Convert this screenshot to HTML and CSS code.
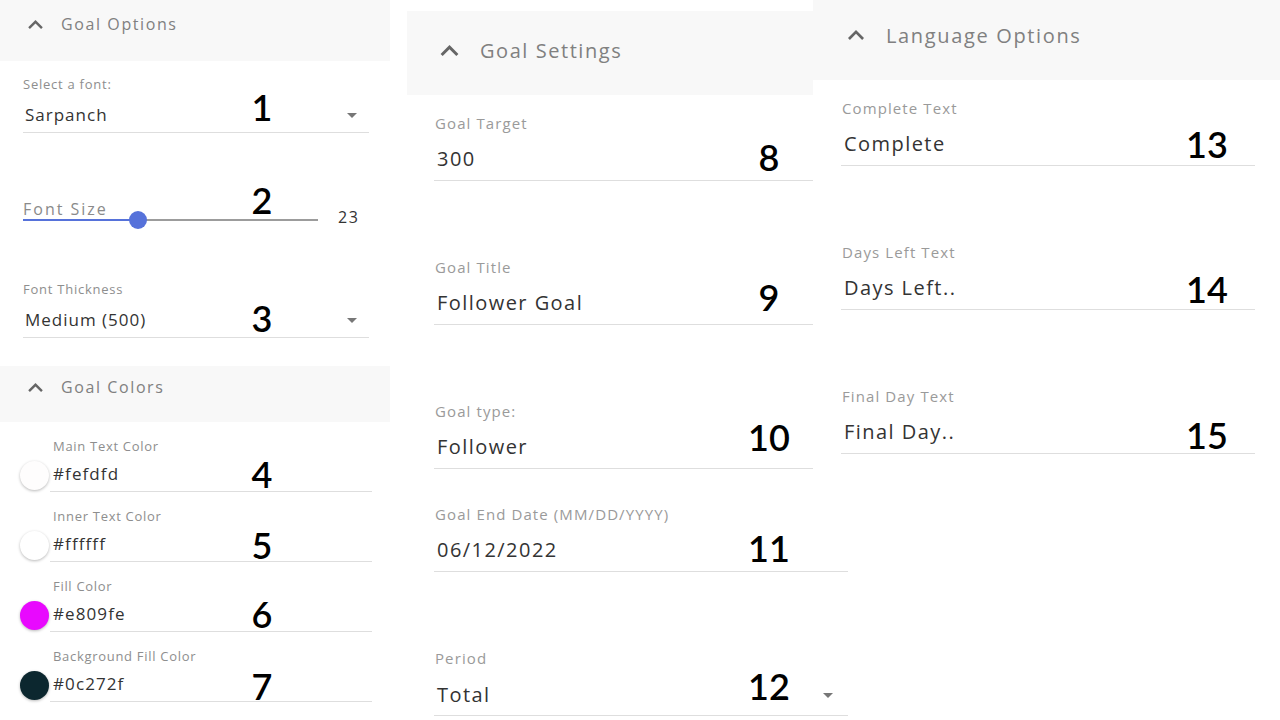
FILE: index.html
```html
<!DOCTYPE html>
<html lang="en">
<head>
<meta charset="utf-8">
<title>Goal widget settings</title>
<link rel="stylesheet" href="styles.css">
</head>
<body>
<div class="collage">

  <section class="col col-a">
    <div class="head head-a">
      <div class="head-line">
        <svg class="chev chev-a" viewBox="6 8 12 7.41"><path d="M7.41 15.41L12 10.83l4.59 4.58L18 14l-6-6-6 6z"/></svg>
        <span>Goal Options</span>
      </div>
    </div>

    <div class="field-a f-font">
      <div class="lab-a">Select a font:</div>
      <div class="val-a">
        <span>Sarpanch</span><span class="caret"></span>
        <span class="anno up8">1</span>
      </div>
    </div>

    <div class="slider">
      <div class="slider-main">
        <div class="slider-label">Font Size</div>
        <div class="track"><div class="track-on"></div><div class="thumb"></div></div>
        <span class="anno anno-slider">2</span>
      </div>
      <div class="slider-val">23</div>
    </div>

    <div class="field-a f-thick">
      <div class="lab-a">Font Thickness</div>
      <div class="val-a">
        <span>Medium (500)</span><span class="caret"></span>
        <span class="anno up2">3</span>
      </div>
    </div>

    <div class="head head-colors">
      <div class="head-line">
        <svg class="chev chev-a" viewBox="6 8 12 7.41"><path d="M7.41 15.41L12 10.83l4.59 4.58L18 14l-6-6-6 6z"/></svg>
        <span>Goal Colors</span>
      </div>
    </div>

    <div class="crow first">
      <span class="swatch sw-fefdfd"></span>
      <div class="cfield">
        <div class="lab-c">Main Text Color</div>
        <div class="val-c"><span>#fefdfd</span><span class="anno up3">4</span></div>
      </div>
    </div>
    <div class="crow">
      <span class="swatch sw-ffffff"></span>
      <div class="cfield">
        <div class="lab-c">Inner Text Color</div>
        <div class="val-c"><span>#ffffff</span><span class="anno up2">5</span></div>
      </div>
    </div>
    <div class="crow">
      <span class="swatch sw-e809fe"></span>
      <div class="cfield">
        <div class="lab-c">Fill Color</div>
        <div class="val-c"><span>#e809fe</span><span class="anno up3">6</span></div>
      </div>
    </div>
    <div class="crow">
      <span class="swatch sw-0c272f"></span>
      <div class="cfield">
        <div class="lab-c">Background Fill Color</div>
        <div class="val-c"><span>#0c272f</span><span class="anno up1">7</span></div>
      </div>
    </div>
  </section>

  <section class="col col-b">
    <div class="head head-b">
      <div class="head-line big">
        <svg class="chev chev-b" viewBox="6 8 12 7.41"><path d="M7.41 15.41L12 10.83l4.59 4.58L18 14l-6-6-6 6z"/></svg>
        <span>Goal Settings</span>
      </div>
    </div>

    <div class="field-b gap-first">
      <div class="lab-b">Goal Target</div>
      <div class="val-b"><span>300</span><span class="anno up2">8</span></div>
    </div>
    <div class="field-b gap-big">
      <div class="lab-b">Goal Title</div>
      <div class="val-b"><span>Follower Goal</span><span class="anno up6">9</span></div>
    </div>
    <div class="field-b gap-big">
      <div class="lab-b">Goal type:</div>
      <div class="val-b"><span>Follower</span><span class="anno up10">10</span></div>
    </div>
    <div class="field-b wide gap-small">
      <div class="lab-b">Goal End Date (MM/DD/YYYY)</div>
      <div class="val-b"><span>06/12/2022</span><span class="anno up2">11</span></div>
    </div>
    <div class="field-b wide gap-period">
      <div class="lab-b">Period</div>
      <div class="val-b val-select"><span>Total</span><span class="caret"></span><span class="anno up7">12</span></div>
    </div>
  </section>

  <section class="col col-c">
    <div class="head head-c">
      <div class="head-line big wider">
        <svg class="chev chev-c" viewBox="6 8 12 7.41"><path d="M7.41 15.41L12 10.83l4.59 4.58L18 14l-6-6-6 6z"/></svg>
        <span>Language Options</span>
      </div>
    </div>

    <div class="field-c gap-first">
      <div class="lab-b">Complete Text</div>
      <div class="val-b"><span>Complete</span><span class="anno">13</span></div>
    </div>
    <div class="field-c gap-big">
      <div class="lab-b">Days Left Text</div>
      <div class="val-b"><span>Days Left..</span><span class="anno dn1">14</span></div>
    </div>
    <div class="field-c gap-big">
      <div class="lab-b">Final Day Text</div>
      <div class="val-b"><span>Final Day..</span><span class="anno dn3">15</span></div>
    </div>
  </section>

</div>
</body>
</html>
```

FILE: styles.css
```css
* { box-sizing: border-box; }

body {
  margin: 0;
  width: 1280px;
  height: 720px;
  overflow: hidden;
  background: #ffffff;
  font-family: "Open Sans", "Liberation Sans", sans-serif;
  color: #333333;
}

.collage {
  display: flex;
  align-items: flex-start;
}

.col { position: relative; }
.col-a { width: 390px; }
.col-b { width: 406px; margin-left: 17px; margin-top: 11px; }
.col-c { width: 467px; }

/* ---------- headers ---------- */
.head {
  background: #f8f8f8;
  color: #808080;
}
.head-line {
  display: flex;
  align-items: center;
  height: 24px;
  font-size: 16px;
  letter-spacing: 1.6px;
}
.head-line.big {
  height: 28px;
  font-size: 20px;
  letter-spacing: 1.55px;
}
.head-line.big.wider { letter-spacing: 1.65px; }
.chev { fill: #666666; flex: none; }
.chev-a { width: 15px; height: 9px; margin-right: 18px; }
.chev-b { width: 19px; height: 11px; margin-right: 21px; }
.chev-c { width: 16px; height: 10px; margin-right: 22px; }

.head-a { height: 61px; padding: 12px 0 0 28px; }
.head-colors { height: 56px; padding: 9px 0 0 28px; margin-top: 28px; }
.head-b { height: 84px; padding: 25px 0 0 33px; }
.head-c { height: 80px; padding: 21px 0 0 35px; }

/* ---------- annotation numbers ---------- */
.anno {
  position: absolute;
  top: 50%;
  transform: translate(-50%, -50%);
  font-family: Lato, "Open Sans", sans-serif;
  font-weight: 600;
  font-size: 36px;
  line-height: 1;
  letter-spacing: 0;
  color: #000000;
}
.up1 { margin-top: -1px; }
.up2 { margin-top: -2px; }
.up3 { margin-top: -3px; }
.up6 { margin-top: -6px; }
.up7 { margin-top: -7px; }
.up8 { margin-top: -8px; }
.up10 { margin-top: -10px; }
.dn1 { margin-top: 1px; }
.dn3 { margin-top: 3px; }

/* ---------- left column fields ---------- */
.field-a {
  width: 346px;
  margin-left: 23px;
}
.f-font { margin-top: 15px; }
.f-thick { margin-top: 60px; }

.lab-a {
  font-size: 13px;
  line-height: 16px;
  color: #8e8e8e;
  letter-spacing: 0.75px;
}
.val-a {
  position: relative;
  display: flex;
  align-items: center;
  justify-content: space-between;
  margin-top: 11px;
  height: 30px;
  padding: 0 12px 5px 2px;
  border-bottom: 1px solid #dedede;
  font-size: 17px;
  line-height: 24px;
  letter-spacing: 1px;
  color: #333333;
}
.val-a .anno { left: 239px; margin-top: -11px; }
.val-a .anno.up2 { margin-top: -5px; }

.caret {
  width: 0;
  height: 0;
  border-left: 5px solid transparent;
  border-right: 5px solid transparent;
  border-top: 5px solid #777777;
}

/* slider */
.slider {
  display: flex;
  align-items: flex-end;
  margin: 67px 0 0 23px;
}
.slider-main {
  position: relative;
  width: 295px;
}
.slider-label {
  font-size: 16px;
  line-height: 19px;
  color: #8a8a8a;
  letter-spacing: 2px;
}
.track {
  position: relative;
  height: 2px;
  background: #9c9c9c;
}
.track-on {
  width: 115px;
  height: 2px;
  background: #5672da;
}
.thumb {
  position: absolute;
  left: 115px;
  top: 1px;
  width: 18px;
  height: 18px;
  margin: -9px 0 0 -9px;
  border-radius: 50%;
  background: #5672da;
}
.anno-slider { left: 239px; top: 0; margin-top: 0; }
.slider-val {
  margin: 0 0 -6px 20px;
  font-size: 16px;
  line-height: 20px;
  letter-spacing: 1.5px;
  color: #333333;
}

/* colour rows */
.crow {
  display: flex;
  align-items: flex-end;
  margin: 16px 0 0 20px;
}
.swatch {
  flex: none;
  width: 29px;
  height: 29px;
  margin-bottom: 2px;
  border-radius: 50%;
  box-shadow: 0 1px 3px rgba(0, 0, 0, 0.28);
}
.sw-fefdfd { background: #fefdfd; }
.sw-ffffff { background: #ffffff; }
.sw-e809fe { background: #e809fe; }
.sw-0c272f { background: #0c272f; }

.cfield {
  width: 322px;
  margin-left: 1px;
}
.lab-c {
  padding-left: 3px;
  font-size: 13px;
  line-height: 16px;
  color: #8e8e8e;
  letter-spacing: 0.7px;
}
.val-c {
  position: relative;
  margin-top: 8px;
  height: 30px;
  padding: 0 0 5px 3px;
  border-bottom: 1px solid #dedede;
  font-size: 17px;
  line-height: 24px;
  letter-spacing: 1.1px;
  color: #333333;
}
.val-c .anno { left: 212px; }

/* ---------- middle / right fields ---------- */
.field-b { width: 379px; margin-left: 27px; }
.field-b.wide { width: 414px; }
.field-c { width: 414px; margin-left: 28px; }

.gap-first { margin-top: 19px; }
.gap-big { margin-top: 77px; }
.gap-small { margin-top: 36px; }
.gap-period { margin-top: 77px; }

.lab-b {
  padding-left: 1px;
  font-size: 15px;
  line-height: 18px;
  color: #9a9a9a;
  letter-spacing: 1.1px;
}
.val-b {
  position: relative;
  display: flex;
  align-items: center;
  justify-content: space-between;
  margin-top: 13px;
  height: 36px;
  padding: 0 15px 7px 3px;
  border-bottom: 1px solid #dedede;
  font-size: 20px;
  line-height: 28px;
  letter-spacing: 1.45px;
  color: #333333;
}
.val-select { padding-top: 2px; }
.val-b .anno { left: 335px; margin-top: -4px; }
.val-b .anno.up2 { margin-top: -6px; }
.val-b .anno.up6 { margin-top: -10px; }
.val-b .anno.up7 { margin-top: -12px; }
.val-b .anno.up10 { margin-top: -14px; }
.field-c .val-b .anno { left: 366px; margin-top: -4px; }
.field-c .val-b .anno.dn1 { margin-top: -3px; }
.field-c .val-b .anno.dn3 { margin-top: -1px; }
```
